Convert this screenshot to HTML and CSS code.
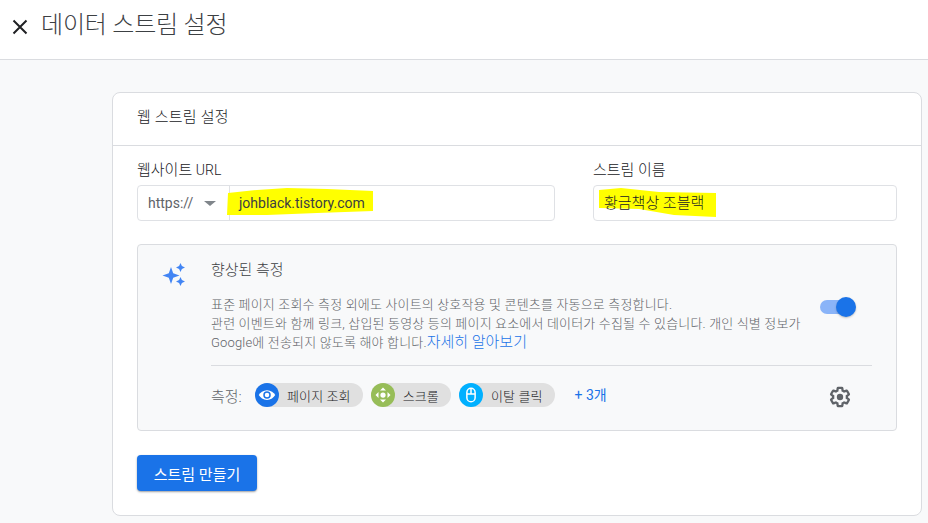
FILE: index.html
```html
<!DOCTYPE html>
<html lang="ko">
<head>
<meta charset="utf-8">
<title>데이터 스트림 설정</title>
<link rel="stylesheet" href="styles.css">
</head>
<body>
<header class="topbar">
  <svg class="close" viewBox="0 0 16 16" width="16" height="16"><path d="M1.500 1.500l13 13M14.500 1.500l-13 13" fill="none" stroke="#202124" stroke-width="2"/></svg>
  <h1 class="title">데이터 스트림 설정</h1>
</header>
<main class="page">
  <section class="card">
    <div class="card-head">웹 스트림 설정</div>
    <div class="card-body">
      <div class="fields">
        <div class="field field-url">
          <label class="label">웹사이트 <span class="latin">URL</span></label>
          <div class="input url-input">
            <div class="proto"><span>https://</span><i class="caret"></i></div>
            <div class="url-value">
              <svg class="mark mark-url" viewBox="0 0 146 27" width="146" height="27"><path d="M1 5L30 2L60 0L100 1L146 3V23L90 25L40 27L0 27Z" fill="#ffff00"/></svg>
              <span class="value">johblack.tistory.com</span>
            </div>
          </div>
        </div>
        <div class="field field-name">
          <label class="label">스트림 이름</label>
          <div class="input name-input">
            <svg class="mark mark-name" viewBox="0 0 117 29" width="117" height="29"><path d="M0 2L22 0L60 4L117 5V29L75 27L40 21L0 20Z" fill="#ffff00"/></svg>
            <span class="value">황금책상 조블랙</span>
          </div>
        </div>
      </div>
      <div class="panel">
        <svg class="sparkle" viewBox="0 0 24 24" width="24" height="24"><path d="M9 5l2.200 6.300L17.500 13.500 11.200 15.700 9 22 6.800 15.700 .5 13.500 6.800 11.300Z" fill="#4285f4"/><path d="M18.500 1l1.400 3.100L23 5.500 19.900 6.900 18.500 10 17.100 6.900 14 5.500 17.100 4.100ZM18.500 15l1.400 3.100L23 19.500 19.900 20.900 18.500 24 17.100 20.900 14 19.500 17.100 18.100Z" fill="#4285f4"/></svg>
        <div class="panel-main">
          <div class="panel-top">
            <h2 class="panel-title">향상된 측정</h2>
            <p class="desc">표준 페이지 조회수 측정 외에도 사이트의 상호작용 및 콘텐츠를 자동으로 측정합니다.<br>관련 이벤트와 함께 링크, 삽입된 동영상 등의 페이지 요소에서 데이터가 수집될 수 있습니다. 개인 식별 정보가<br>Google에 전송되지 않도록 해야 합니다.<a class="more" href="#">자세히 알아보기</a></p>
            <div class="toggle"><span class="track"></span><span class="thumb"></span></div>
          </div>
          <div class="panel-bottom">
            <span class="measure-label">측정:</span>
            <span class="chip">
              <span class="chip-icon icon-blue"><svg viewBox="0 0 24 24" width="20" height="20"><path d="M12 5.500C7 5.500 3 8.500 1 12c2 3.500 6 6.500 11 6.500s9-3 11-6.500c-2-3.500-6-6.500-11-6.500Z" fill="#fff"/><circle cx="12" cy="12" r="5" fill="#1a73e8"/><circle cx="12" cy="12" r="3" fill="#fff"/></svg></span>
              <span class="chip-text">페이지 조회</span>
            </span>
            <span class="chip">
              <span class="chip-icon icon-green"><svg viewBox="0 0 24 24" width="20" height="20"><path d="M12 2l4 4H8ZM12 22l-4-4h8ZM2 12l4-4v8ZM22 12l-4 4V8Z" fill="#fff"/><circle cx="12" cy="12" r="3.500" fill="#fff"/></svg></span>
              <span class="chip-text">스크롤</span>
            </span>
            <span class="chip">
              <span class="chip-icon icon-cyan"><svg viewBox="0 0 24 24" width="20" height="20"><rect x="6.500" y="3" width="11" height="18" rx="5.500" fill="none" stroke="#fff" stroke-width="2"/><path d="M6.500 10.500h11M12 3v7.500" stroke="#fff" stroke-width="2" fill="none"/></svg></span>
              <span class="chip-text">이탈 클릭</span>
            </span>
            <a class="plus" href="#">+ 3개</a>
            <svg class="gear" viewBox="0 0 24 24" width="22" height="22"><path d="M19.430 12.980c.04-.32.07-.64.07-.98s-.03-.66-.07-.98l2.110-1.650c.19-.15.24-.42.12-.64l-2-3.460c-.12-.22-.39-.3-.61-.22l-2.490 1c-.52-.4-1.080-.73-1.690-.98l-.38-2.650C14.460 2.180 14.250 2 14 2h-4c-.25 0-.46.18-.49.420l-.38 2.650c-.61.25-1.170.59-1.690.98l-2.490-1c-.23-.09-.49 0-.61.220l-2 3.460c-.13.220-.07.490.12.640l2.110 1.650c-.04.320-.07.650-.07.980s.03.660.07.980l-2.110 1.650c-.19.150-.24.420-.12.640l2 3.460c.12.220.39.300.61.220l2.490-1c.52.400 1.080.730 1.690.980l.38 2.650c.03.240.24.420.49.420h4c.25 0 .46-.18.49-.42l.38-2.650c.61-.25 1.170-.59 1.690-.98l2.490 1c.23.090.49 0 .61-.22l2-3.460c.12-.22.070-.49-.12-.64l-2.110-1.650Z" fill="none" stroke="#5f6368" stroke-width="2.500"/><circle cx="12" cy="12" r="3.500" fill="#5f6368"/></svg>
          </div>
        </div>
      </div>
      <button class="primary" type="button">스트림 만들기</button>
    </div>
  </section>
</main>
</body>
</html>
```

FILE: styles.css
```css
* { box-sizing: border-box; }
html, body { margin: 0; padding: 0; height: 100%; overflow: hidden; }
body {
  width: 928px;
  height: 523px;
  background: #f8f9fa;
  color: #3c4043;
  font-family: Roboto, "Noto Sans CJK KR", sans-serif;
  font-size: 14px;
}
.topbar {
  display: flex;
  align-items: flex-start;
  height: 60px;
  padding-left: 12px;
  background: #fff;
  border-bottom: 1px solid #dadce0;
}
.close { margin-top: 19px; }
.title {
  margin: 6px 0 0 13px;
  font-size: 24px;
  line-height: 38px;
  font-weight: 300;
  letter-spacing: -.2px;
  color: #3c4043;
}
.page { padding: 32px 6px 0 112px; }
.card {
  height: 424px;
  background: #fff;
  border: 1px solid #dadce0;
  border-radius: 8px;
}
.card-head {
  height: 53px;
  padding-left: 24px;
  line-height: 48px;
  font-size: 15px;
  font-weight: 300;
  letter-spacing: .2px;
  color: #202124;
  border-bottom: 1px solid #dadce0;
}
.card-body { padding: 14px 24px 0; }
.fields { display: flex; gap: 38px; }
.field-url { width: 418px; }
.field-name { width: 304px; }
.label { display: block; height: 25px; line-height: 20px; font-size: 15px; font-weight: 300; color: #202124; }
.latin { font-size: 14px; font-weight: 300; }
.input {
  position: relative;
  display: flex;
  align-items: center;
  height: 36px;
  border: 1px solid #dfe1e5;
  border-radius: 4px;
  background: #fff;
}
.proto {
  display: flex;
  align-items: center;
  width: 92px;
  height: 100%;
  padding-left: 10px;
  border-right: 1px solid #dfe1e5;
  color: #5f6368;
}
.caret {
  margin-left: 11px;
  border-left: 6px solid transparent;
  border-right: 6px solid transparent;
  border-top: 5px solid #80868b;
}
.url-value { position: relative; display: flex; align-items: center; padding-left: 9px; height: 100%; }
.mark { position: absolute; }
.mark-url { left: -3px; top: 2px; }
.mark-name { left: 5px; top: 2px; }
.value { position: relative; color: #3c4043; }
.name-input { padding-left: 10px; }
.name-input .value { font-size: 15px; font-weight: 300; color: #202124; margin-top: -3px; }
.panel {
  display: flex;
  height: 187px;
  margin-top: 23px;
  padding: 0 24px;
  background: #f8f9fa;
  border: 1px solid #dadce0;
  border-radius: 4px;
}
.sparkle { margin-top: 17px; flex: none; }
.panel-main { flex: 1; margin-left: 25px; min-width: 0; }
.panel-top { position: relative; height: 121px; border-bottom: 1px solid #dadce0; }
.panel-title { margin: 0; padding-top: 14px; font-size: 15px; line-height: 22px; font-weight: 300; color: #3c4043; }
.desc { margin: 14px 0 0; font-size: 13px; line-height: 19px; font-weight: 300; letter-spacing: .17px; color: #5f6368; white-space: nowrap; }
.more { font-size: 15px; letter-spacing: 0; font-weight: 300; color: #1a73e8; text-decoration: none; }
.toggle { position: absolute; left: 609px; top: 51px; width: 36px; height: 22px; }
.track { position: absolute; left: 0; top: 4px; width: 28px; height: 14px; border-radius: 7px; background: #8ab4f8; }
.thumb { position: absolute; left: 16px; top: 1px; width: 20px; height: 20px; border-radius: 50%; background: #1a73e8; box-shadow: 0 1px 2px rgba(60,64,67,.3); }
.panel-bottom { display: flex; align-items: center; height: 58px; position: relative; }
.measure-label { width: 44px; font-size: 15px; font-weight: 300; color: #5f6368; }
.chip {
  display: flex;
  align-items: center;
  height: 24px;
  margin-right: 8px;
  border-radius: 12px;
  background: #e0e0e0;
  font-size: 13px;
  font-weight: 300;
  letter-spacing: .12px;
  color: #202124;
}
.chip-icon { display: flex; align-items: center; justify-content: center; width: 24px; height: 24px; border-radius: 50%; }
.chip-icon svg { width: 18px; height: 18px; }
.icon-blue { background: #1a73e8; }
.icon-green { background: #97bd58; }
.icon-cyan { background: #00b0ff; }
.chip-text { padding: 0 12px 0 8px; }
.plus { margin-left: 12px; margin-top: -3px; font-size: 14px; color: #1a73e8; text-decoration: none; }
.gear { position: absolute; left: 618px; top: 20px; }
.primary {
  display: block;
  width: 120px;
  height: 36px;
  margin-top: 24px;
  border: 0;
  border-radius: 4px;
  background: #1a73e8;
  color: #fff;
  font: inherit;
  font-size: 15px;
  box-shadow: 0 1px 2px rgba(60,64,67,.5);
}
```
